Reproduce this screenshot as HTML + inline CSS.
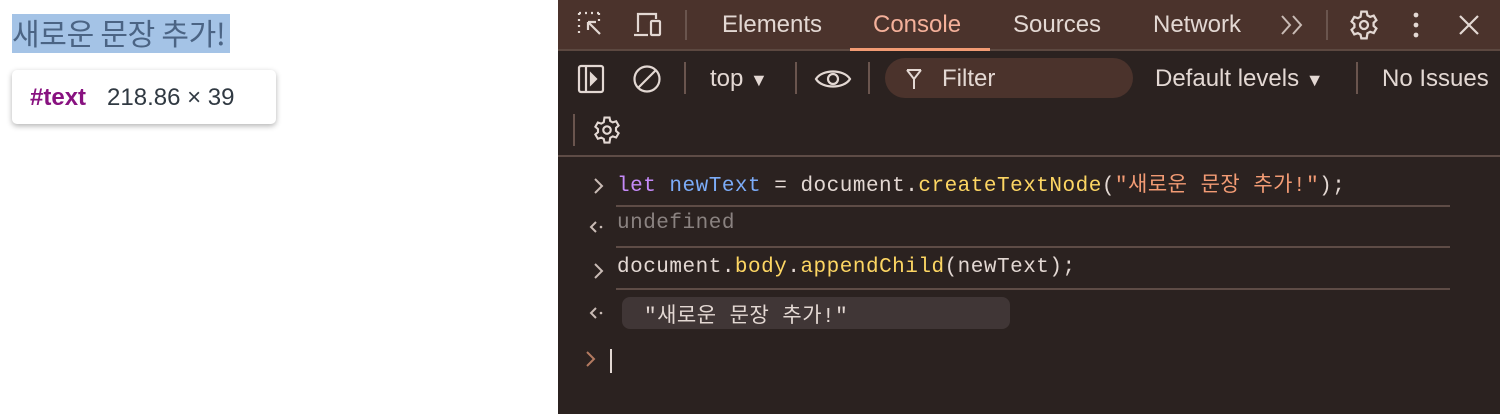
<!DOCTYPE html>
<html><head><meta charset="utf-8"><style>
*{margin:0;padding:0;box-sizing:border-box}
body{width:1500px;height:414px;background:#fff;position:relative;overflow:hidden;font-family:"Liberation Sans","Noto Sans CJK KR",sans-serif}
.abs{position:absolute}
.sel{left:12px;top:14px;width:218px;height:39px;background:#a4c3e6;color:#4b6484;font-size:30px;line-height:37px;white-space:nowrap;font-family:"Noto Sans CJK KR",sans-serif;letter-spacing:-0.3px}
.tip{left:12px;top:70px;width:264px;height:54px;background:#fff;border-radius:5px;box-shadow:0 2px 6px rgba(0,0,0,.3);font-size:24px;line-height:56px;padding-left:18px;color:#303942;white-space:nowrap}
.arrow{left:38px;top:58px;width:0;height:0;border-left:12px solid transparent;border-right:12px solid transparent;border-bottom:12px solid #fff}
.dt{left:558px;top:0;width:942px;height:414px;background:#2b2220;color:#e3d8d3}
.top{left:0;top:0;width:942px;height:51px;background:#4b332c;border-bottom:2px solid #5c4840}
.tab{top:0;height:51px;line-height:50px;font-size:24px;color:#e3d8d3}
.mono{font-family:"Liberation Mono","Noto Sans CJK KR",monospace;font-size:21px;letter-spacing:.5px;white-space:nowrap}
.line{left:58px;width:834px;height:2px;background:#5e4c46}
svg{position:absolute}
.tb{font-size:24px}
</style></head><body>
<div class="abs sel">새로운 문장 추가!</div>
<div class="abs arrow"></div>
<div class="abs tip"><b style="color:#881280">#text</b><span style="margin-left:21px">218.86 × 39</span></div>

<div class="abs dt">
 <div class="abs top"></div>
 <svg style="left:18px;top:10px" width="30" height="30" viewBox="0 0 30 30" fill="none" stroke="#e3d8d3" stroke-width="2.2"><path d="M3 3h2M9 3h2M15 3h2M21 3h2M3 3v2M3 9v2M3 15v2M3 21v2M23 3v2M23 9v2" /><path d="M12 12l12 12M12 12h8M12 12v8"/></svg>
 <svg style="left:74px;top:10px" width="34" height="30" viewBox="0 0 34 30" fill="none" stroke="#e3d8d3" stroke-width="2.2"><path d="M6 22V4h18v5"/><path d="M2 25h14"/><rect x="19" y="11" width="9" height="14" rx="1"/></svg>
 <div class="abs" style="left:127px;top:10px;width:2px;height:30px;background:#6a554e"></div>
 <div class="abs tab" style="left:164px">Elements</div>
 <div class="abs tab" style="left:315px;color:#f4b09a">Console</div>
 <div class="abs" style="left:292px;top:48px;width:140px;height:3px;background:#f29b74"></div>
 <div class="abs tab" style="left:455px">Sources</div>
 <div class="abs tab" style="left:595px">Network</div>
 <svg style="left:722px;top:14px" width="26" height="22" fill="none" stroke="#c9bbb5" stroke-width="2"><path d="M2 2l8 9-8 9M13 2l8 9-8 9"/></svg>
 <div class="abs" style="left:768px;top:10px;width:2px;height:30px;background:#6a554e"></div>
 <svg style="left:790px;top:9px" width="32" height="32" viewBox="0 0 24 24" fill="none" stroke="#e3d8d3" stroke-width="1.7"><circle cx="12" cy="12" r="3"/><path d="M10 2h4l.6 2.8 2 1.1 2.7-.9 2 3.4-2.1 1.9v2.4l2.1 1.9-2 3.4-2.7-.9-2 1.1L14 22h-4l-.6-2.8-2-1.1-2.7.9-2-3.4 2.1-1.9v-2.4L2.7 9.4l2-3.4 2.7.9 2-1.1z"/></svg>
 <svg style="left:854px;top:12px" width="8" height="26"><circle cx="4" cy="3" r="2.4" fill="#e3d8d3"/><circle cx="4" cy="13" r="2.4" fill="#e3d8d3"/><circle cx="4" cy="23" r="2.4" fill="#e3d8d3"/></svg>
 <svg style="left:900px;top:14px" width="22" height="22" stroke="#e3d8d3" stroke-width="2.2"><path d="M2 2l18 18M20 2L2 20"/></svg>

 <svg style="left:18px;top:64px" width="30" height="30" fill="none" stroke="#e3d8d3" stroke-width="2.2"><rect x="3" y="2" width="24" height="26" rx="2"/><path d="M10 2v26"/><path d="M15 10l5 5-5 5z" fill="#e3d8d3"/></svg>
 <svg style="left:74px;top:64px" width="30" height="30" fill="none" stroke="#e3d8d3" stroke-width="2.2"><circle cx="15" cy="15" r="12.5"/><path d="M24 6L6 24"/></svg>
 <div class="abs" style="left:126px;top:62px;width:2px;height:32px;background:#6a554e"></div>
 <div class="abs tb" style="left:152px;top:65px">top <span style="font-size:18px">▼</span></div>
 <div class="abs" style="left:237px;top:62px;width:2px;height:32px;background:#6a554e"></div>
 <svg style="left:256px;top:66px" width="38" height="26" fill="none" stroke="#e3d8d3" stroke-width="2.2"><path d="M2 13C8 3 30 3 36 13C30 23 8 23 2 13z"/><circle cx="19" cy="13" r="5"/></svg>
 <div class="abs" style="left:310px;top:62px;width:2px;height:32px;background:#6a554e"></div>
 <div class="abs" style="left:327px;top:58px;width:248px;height:40px;border-radius:20px;background:#4b332c"></div>
 <svg style="left:348px;top:68px" width="16" height="22" fill="none" stroke="#e3d8d3" stroke-width="2"><path d="M1 2h14M1 2l7 9 7-9M8 11v10"/></svg>
 <div class="abs tb" style="left:384px;top:65px">Filter</div>
 <div class="abs tb" style="left:597px;top:65px">Default levels <span style="font-size:18px">▼</span></div>
 <div class="abs" style="left:798px;top:62px;width:2px;height:32px;background:#6a554e"></div>
 <div class="abs tb" style="left:824px;top:65px">No Issues</div>
 <div class="abs" style="left:15px;top:114px;width:2px;height:32px;background:#6a554e"></div>
 <svg style="left:34px;top:115px" width="30" height="30" viewBox="0 0 24 24" fill="none" stroke="#e3d8d3" stroke-width="1.7"><circle cx="12" cy="12" r="3"/><path d="M10 2h4l.6 2.8 2 1.1 2.7-.9 2 3.4-2.1 1.9v2.4l2.1 1.9-2 3.4-2.7-.9-2 1.1L14 22h-4l-.6-2.8-2-1.1-2.7.9-2-3.4 2.1-1.9v-2.4L2.7 9.4l2-3.4 2.7.9 2-1.1z"/></svg>
 <div class="abs" style="left:0;top:155px;width:942px;height:2px;background:#5e4c46"></div>

 <svg style="left:35px;top:177px" width="12" height="18" fill="none" stroke="#c9bbb5" stroke-width="2"><path d="M2 2l7 7-7 7"/></svg>
 <div class="abs mono" style="left:59px;top:168px"><span style="color:#c58af9">let</span> <span style="color:#7cacf8">newText</span> = document.<span style="color:#fdd663">createTextNode</span>(<span style="color:#f29b74">"새로운 문장 추가!"</span>);</div>
 <div class="abs line" style="top:205px"></div>
 <svg style="left:31px;top:220px" width="16" height="14" fill="none" stroke="#c9bbb5" stroke-width="2"><path d="M7 2L2 7l5 5"/><circle cx="12" cy="7" r="1.3" fill="#c9bbb5" stroke="none"/></svg>
 <div class="abs mono" style="left:59px;top:212px;color:#8a8280">undefined</div>
 <div class="abs line" style="top:246px"></div>
 <svg style="left:35px;top:262px" width="12" height="18" fill="none" stroke="#c9bbb5" stroke-width="2"><path d="M2 2l7 7-7 7"/></svg>
 <div class="abs mono" style="left:59px;top:256px">document.<span style="color:#fdd663">body</span>.<span style="color:#fdd663">appendChild</span>(newText);</div>
 <div class="abs line" style="top:288px"></div>
 <svg style="left:31px;top:306px" width="16" height="14" fill="none" stroke="#c9bbb5" stroke-width="2"><path d="M7 2L2 7l5 5"/><circle cx="12" cy="7" r="1.3" fill="#c9bbb5" stroke="none"/></svg>
 <div class="abs" style="left:64px;top:297px;width:388px;height:32px;border-radius:8px;background:#403636"></div>
 <div class="abs mono" style="left:86px;top:299px">"새로운 문장 추가!"</div>
 <svg style="left:27px;top:350px" width="12" height="18" fill="none" stroke="#b37a60" stroke-width="2"><path d="M2 2l7 7-7 7"/></svg>
 <div class="abs" style="left:52px;top:349px;width:2px;height:24px;background:#e3d8d3"></div>
</div>
</body></html>
